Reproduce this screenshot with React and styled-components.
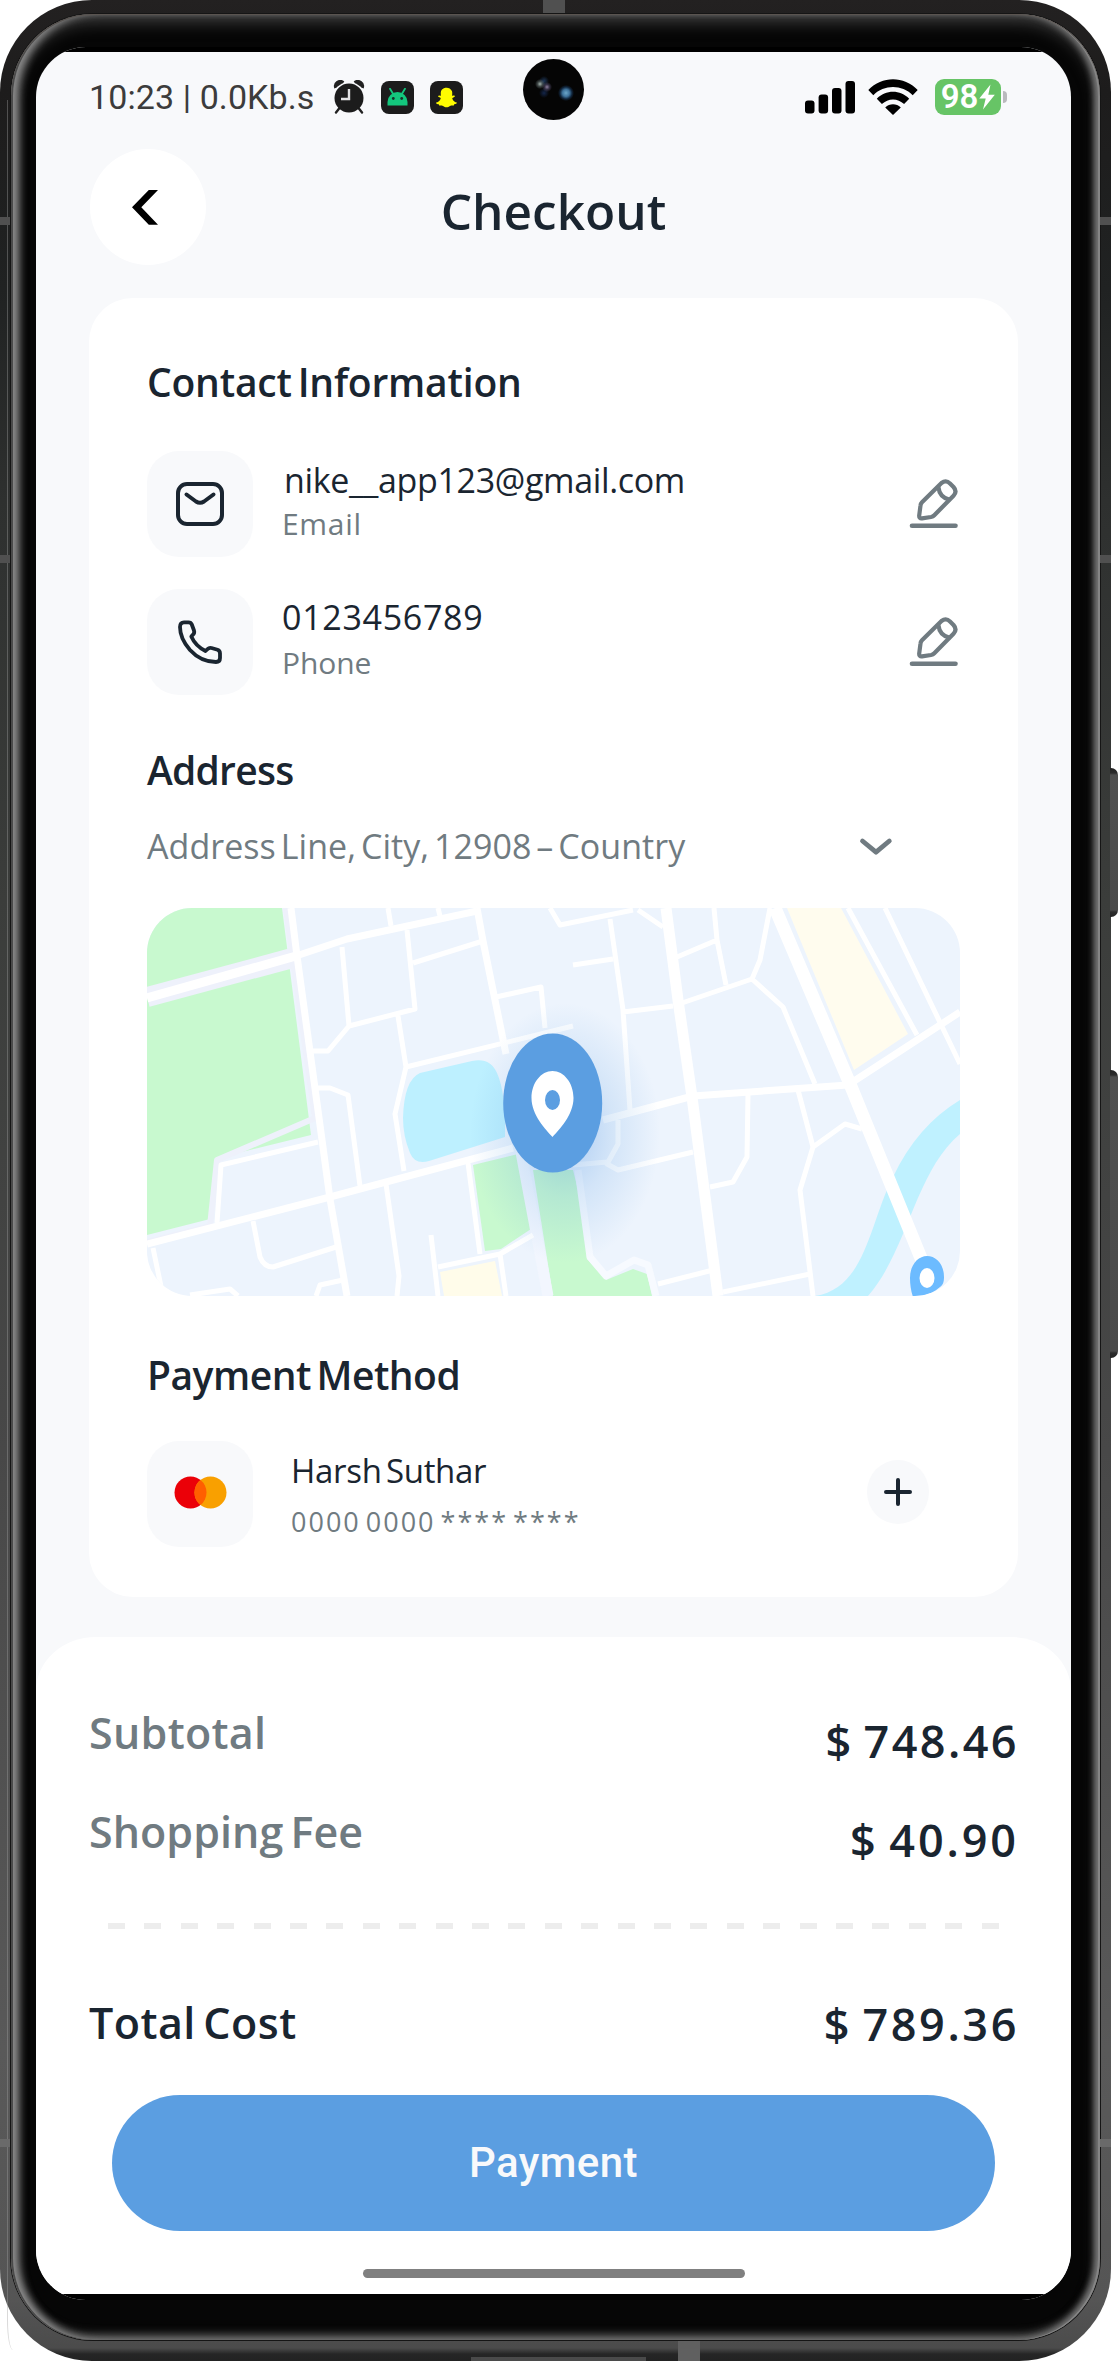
import React from "react";
import styled, { createGlobalStyle } from "styled-components";
import { FaSnapchatGhost } from "react-icons/fa";

const ink = "#1a2530";
const muted = "#707b81";
const surface = "#f8f9fb";
const blue = "#5b9ee1";

const GlobalStyle = createGlobalStyle`
  *, *::before, *::after { box-sizing: border-box; }
  body { margin: 0; background: #fff; overflow: hidden; }
  svg { display: block; flex: none; }
`;

/* ---------- Device ---------- */

const Device = styled.div`
  position: relative;
  width: 1118px;
  height: 2361px;
  overflow: hidden;
  font-family: "Open Sans", "Noto Sans", sans-serif;
  font-weight: 450;
  word-spacing: -4px;
  color: ${ink};
`;

const Shell = styled.div`
  width: 1111px;
  height: 2361px;
  padding: 14px 11px 21px;
  border-radius: 92px;
  overflow: hidden;
  background: linear-gradient(
    180deg,
    #232121 0,
    #1d1c1c 90px,
    #202222 290px,
    #2e302f 500px,
    #3b3d3b 900px,
    #484848 1450px,
    #595959 2050px,
    #555 2300px,
    #4b4b4b 2348px,
    #262626 2354px,
    #222 2361px
  );
`;

const Bezel = styled.div`
  height: 2326px;
  padding: 33px 29px 40px 25px;
  border-radius: 82px;
  background: #060606;
  box-shadow:
    0 0 0 1px #151515,
    inset 0 1px 0 #5a5450,
    inset 2px 0 0 #4a4a4a,
    inset -2px 0 0 #858585,
    inset 11px 0 9px -3px #8c8c8c,
    inset -8px 0 6px -2px #777,
    inset 0 8px 18px -2px #4c4c4c,
    inset 0 -6px 10px -1px #6a6a6a;
`;

const SideKey = styled.div`
  position: absolute;
  left: 1110px;
  top: ${(p) => p.$top}px;
  width: 8px;
  height: ${(p) => p.$height}px;
  border-radius: 0 7px 7px 0;
  background: linear-gradient(180deg, #242424 0, #2c2c2c 5px, #505050 7px, #4a4a4a calc(100% - 7px), #2c2c2c calc(100% - 5px), #242424 100%);
`;

const Antenna = styled.div`
  position: absolute;
  left: ${(p) => p.$x}px;
  top: ${(p) => p.$y}px;
  width: ${(p) => p.$w}px;
  height: ${(p) => p.$h}px;
  background: ${(p) => p.$tone || "#505050"};
`;

const EdgeSheen = styled.div`
  position: absolute;
  left: 7px;
  top: 100px;
  width: 6px;
  height: 2250px;
  border-left: 1px solid rgba(160, 160, 160, 0.4);
  border-bottom-left-radius: 6px 30px;
`;

const Screen = styled.main`
  position: relative;
  display: flex;
  flex-direction: column;
  height: 2253px;
  border-radius: 50px;
  overflow: hidden;
  background: ${surface};
`;

const BlackStrip = styled.div`
  flex: none;
  height: ${(p) => p.$size}px;
  background: #000;
`;

const Camera = styled.div`
  position: absolute;
  left: 487px;
  top: 12px;
  width: 61px;
  height: 61px;
  border-radius: 50%;
  background:
    radial-gradient(circle at 17px 25px, #a3b3ad 0, rgba(120, 135, 135, 0.5) 2.5px, transparent 5px),
    radial-gradient(circle at 24px 28px, #8d809f 0, rgba(100, 90, 130, 0.5) 2.5px, transparent 5px),
    radial-gradient(circle at 21px 22px, #1d3658 0, transparent 5px),
    radial-gradient(circle at 21px 34px, #14264a 0, transparent 5px),
    radial-gradient(circle at 43px 34px, #6ba6c9 0, #3f749d 3.5px, #10253c 6px, transparent 8px),
    #050505;
`;

/* ---------- Status bar ---------- */

const StatusBar = styled.header`
  display: flex;
  align-items: center;
  justify-content: space-between;
  height: 90px;
  padding: 0 64px 0 53px;
`;

const StatusGroup = styled.div`
  display: flex;
  align-items: center;
  gap: ${(p) => p.$gap}px;
`;

const Clock = styled.span`
  width: 228px;
  font: 400 34px/44px Roboto, sans-serif;
  letter-spacing: 0.1px;
  word-spacing: 0;
  color: #3c3c3c;
  white-space: nowrap;
`;

const AppTile = styled.span`
  display: flex;
  align-items: center;
  justify-content: center;
  width: 33px;
  height: 33px;
  border-radius: 8px;
  background: #1c1c1c;
  color: #fffc00;
`;

const Battery = styled.div`
  display: flex;
  align-items: center;
  gap: 2px;
`;

const BatteryBody = styled.div`
  display: flex;
  align-items: center;
  justify-content: center;
  gap: 1px;
  width: 66px;
  height: 36px;
  border-radius: 9px;
  background: #67c466;
  color: #fff;
  font: 600 33px/36px Roboto, sans-serif;
`;

const BatteryCap = styled.div`
  width: 4px;
  height: 12px;
  border-radius: 0 6px 6px 0;
  background: #b9babd;
`;

/* ---------- Header ---------- */

const TitleBar = styled.div`
  display: grid;
  grid-template-columns: 116px 1fr 116px;
  align-items: center;
  margin: 7px 54px 0 54px;
  height: 116px;
`;

const BackButton = styled.button`
  display: flex;
  align-items: center;
  justify-content: center;
  width: 116px;
  height: 116px;
  padding: 0 7px 0 0;
  border: 0;
  border-radius: 50%;
  background: #fff;
`;

const PageTitle = styled.h1`
  margin: 0;
  padding-top: 8px;
  text-align: center;
  font-size: 49.5px;
  line-height: 60px;
  font-weight: 600;
`;

/* ---------- Card ---------- */

const Card = styled.section`
  display: flex;
  flex-direction: column;
  flex: none;
  height: 1299px;
  margin: 33px 53px 0;
  padding: 58px 58px 0;
  border-radius: 44px;
  background: #fff;
`;

const SectionTitle = styled.h2`
  margin: ${(p) => p.$top || 0}px 0 0;
  font-size: 39px;
  line-height: 52px;
  font-weight: 600;
  letter-spacing: ${(p) => p.$track}px;
  white-space: nowrap;
`;

const InfoRow = styled.div`
  display: flex;
  align-items: center;
  height: 106px;
  margin-top: ${(p) => p.$top}px;
`;

const IconTile = styled.div`
  display: flex;
  flex: none;
  align-items: center;
  justify-content: center;
  width: 106px;
  height: 106px;
  padding-bottom: ${(p) => p.$lift || 0}px;
  border-radius: 32px;
  background: ${surface};
`;

const InfoText = styled.div`
  flex: 1;
  align-self: flex-start;
  padding: ${(p) => p.$pad}px 0 0 ${(p) => p.$indent}px;
`;

const Value = styled.div`
  font-size: ${(p) => p.$size || 34}px;
  line-height: 44px;
  text-indent: ${(p) => p.$indent || 0}px;
  letter-spacing: ${(p) => p.$track}px;
  white-space: nowrap;
`;

const Caption = styled.div`
  margin-top: ${(p) => p.$top}px;
  font-size: ${(p) => p.$size || 30}px;
  line-height: 36px;
  letter-spacing: ${(p) => p.$track}px;
  color: ${muted};
  white-space: nowrap;
`;

const IconButton = styled.button`
  padding: 0;
  border: 0;
  background: none;
`;

const AddButton = styled.button`
  display: flex;
  align-items: center;
  justify-content: center;
  width: 62px;
  height: 64px;
  margin: 0 31px 4px 0;
  padding: 0;
  border: 0;
  border-radius: 50%;
  background: ${surface};
`;

const AddressRow = styled.div`
  display: flex;
  align-items: center;
  justify-content: space-between;
  margin-top: 27px;
  padding-right: 66px;
  font-size: 34px;
  line-height: 46px;
  letter-spacing: 0.05px;
  color: ${muted};
  white-space: nowrap;
`;

const MapFrame = styled.div`
  flex: none;
  height: 388px;
  margin-top: 39px;
  border-radius: 45px;
  overflow: hidden;
`;

/* ---------- Summary ---------- */

const Summary = styled.section`
  display: flex;
  flex: 1;
  flex-direction: column;
  margin-top: 40px;
  padding: 66px 53px 0;
  border-radius: 60px 60px 0 0 / 54px 54px 0 0;
  background: #fff;
`;

const SummaryRow = styled.div`
  display: flex;
  justify-content: space-between;
  margin-top: ${(p) => p.$top || 0}px;
  font-weight: 600;
  line-height: 58px;
`;

const Label = styled.span`
  padding-top: 1px;
  font-size: 43px;
  letter-spacing: ${(p) => p.$track || 0}px;
  color: ${(p) => (p.$strong ? ink : muted)};
`;

const Amount = styled.span`
  margin-right: -1px;
  padding-top: ${(p) => p.$drop}px;
  font-size: 45px;
  letter-spacing: ${(p) => p.$track}px;
`;

const DashedRule = styled.div`
  height: 6px;
  margin: 54px 19px 0;
  background: repeating-linear-gradient(90deg, #ededed 0 17px, transparent 17px 36.4px);
`;

const PayButton = styled.button`
  height: 136px;
  margin: 42px 23px 0;
  padding: 0;
  border: 0;
  border-radius: 68px;
  background: ${blue};
  color: #f8f9fb;
  font: 500 42px/48px Roboto, sans-serif;
  letter-spacing: 0.45px;
`;

const HomeIndicator = styled.div`
  align-self: center;
  width: 382px;
  height: 9px;
  margin-top: 38px;
  border-radius: 5px;
  background: #808080;
`;

/* ---------- Icons ---------- */

const AlarmIcon = () => (
  <svg width="32" height="34" viewBox="-.5 0 32 34">
    <path d="M2 8A5 5 0 0 1 10 2.500M29 8A5 5 0 0 0 21 2.500" fill="#222" stroke="#222" strokeWidth="2.500" />
    <path d="M6 28l-3.500 4.500M25 28l3.500 4.500" stroke="#222" strokeWidth="2.400" strokeLinecap="round" />
    <circle cx="15.500" cy="18" r="14.500" fill="#1c1c1c" />
    <path d="M15.500 9v10H7.500" fill="none" stroke="#e2e2e4" strokeWidth="2.400" />
  </svg>
);

const AndroidIcon = () => (
  <svg width="21" height="19" viewBox="0 0 21 19">
    <path d="M3 .8l3 5M18 .8l-3 5" stroke="#13c77d" strokeWidth="1.800" strokeLinecap="round" />
    <path d="M.5 17.500V14a10 10 0 0 1 20 0v3.500z" fill="#13c77d" />
    <circle cx="6.300" cy="10.500" r="1.400" fill="#17342a" />
    <circle cx="14.700" cy="10.500" r="1.400" fill="#17342a" />
  </svg>
);

const SignalIcon = () => (
  <svg width="46" height="33" viewBox="0 0 46 33" overflow="visible">
    <rect x="0" y="19.500" width="9.500" height="13" rx="3" />
    <rect x="13.600" y="13.500" width="9.500" height="19" rx="3" />
    <rect x="27" y="7" width="9.500" height="25.500" rx="3" />
    <rect x="40.500" y="0" width="9.500" height="32.500" rx="3" />
  </svg>
);

const WifiIcon = () => (
  <svg width="50" height="36" viewBox="0 0 50 36">
    <path d="M.3 11C14-3.300 36-3.300 49.700 11l-5 5.200C34 5.300 16 5.300 5.300 16.200z" />
    <path d="M8.800 19.700c9-9.200 23.400-9.200 32.400 0l-5.100 5.400c-6.200-6.300-16-6.300-22.200 0z" />
    <path d="M17.200 28.500c4.500-4.300 11.100-4.300 15.600 0L25 36z" />
  </svg>
);

const BoltIcon = () => (
  <svg width="16" height="26" viewBox="0 0 16 26">
    <path d="M11.500.5L.3 14.500h6.400L4 25.500 15.800 10.800H9.300z" fill="#fff" />
  </svg>
);

const BackIcon = () => (
  <svg width="26" height="35" viewBox="0 0 26 35">
    <path d="M0 17.300L16.800 0H26L9.300 17.300 26 34.700h-9.200z" />
  </svg>
);

const MailIcon = () => (
  <svg width="48" height="44" viewBox="0 0 48 44" fill="none" stroke={ink} strokeWidth="4" strokeLinecap="round" strokeLinejoin="round">
    <rect x="2" y="2" width="44" height="40" rx="9" />
    <path d="M10.500 12.500l9.500 7q4 2.600 8 0l9.500-7" />
  </svg>
);

const PhoneIcon = () => (
  <svg width="44" height="44" viewBox="0 0 44 44" fill="none" stroke={ink} strokeWidth="3.800" strokeLinejoin="round">
    <path d="M6 2.300H10.500Q13 2.300 13.800 4.500L16 10.500Q16.800 13 14.800 14.800L13.300 16.500Q17.500 26 27.500 31L29.800 28.800Q31.200 27.400 33.500 28L39.500 29.800Q42 30.700 42 33.500V38Q42 42 38 42Q23 42 12 30Q2 18.500 2 7Q2 2.300 6 2.300Z" />
  </svg>
);

const EditIcon = () => (
  <svg width="52" height="52" viewBox="0 0 52 52" fill="none" stroke={muted} strokeWidth="4.200" strokeLinecap="round" strokeLinejoin="round">
    <path d="M4 47.700H47.500" strokeWidth="4.600" />
    <path d="M12.500 27.500Q12.700 25.500 14 24.200L33.500 5Q38 1.500 42 5.500L45.500 9Q49.500 13.500 45.500 17.800L26.300 37.200Q25 38.600 23 39L14 40.300Q11 40.600 11.200 37.500Z" />
    <path d="M30.500 9.500Q31.500 19 41 21.500" />
  </svg>
);

const ChevronDownIcon = () => (
  <svg width="36" height="20" viewBox="0 0 36 20" fill="none" stroke={muted} strokeWidth="4.800" strokeLinecap="round" strokeLinejoin="round">
    <path d="M4.500 5L18 16.200 31.300 5" />
  </svg>
);

const PlusIcon = () => (
  <svg width="28" height="28" viewBox="0 0 28 28" stroke={ink} strokeWidth="4" strokeLinecap="round">
    <path d="M14 2v24M2 14h24" />
  </svg>
);

const CardBrandIcon = () => (
  <svg width="53" height="33" viewBox="0 0 53 33">
    <circle cx="16.500" cy="16.500" r="16" fill="#eb0008" />
    <circle cx="36.500" cy="16.500" r="16" fill="#f9a000" />
    <path d="M26.500 4a16 16 0 0 1 0 25 16 16 0 0 1 0-25z" fill="#ff5f00" />
  </svg>
);

const minorRoads = [
  "M241 0L244 18", "M291 0L293 8", "M195 39L202 118",
  "M260 22L268 101L202 118L181 143H165", "M266 55L336 33",
  "M349 89L394 79L398 120", "M426 118L259 159L248 206L257 263", "M251 108L259 159",
  "M171 180H183L201 187L213 278", "M70 315L74 257L171 234",
  "M106 313L113 349Q117 359 126 359L189 339", "M6 340L16 388",
  "M169 388L173 377L196 372", "M239 276L252 368L250 388", "M284 327L291 388",
  "M321 255L333 346", "M291 359L353 346L386 327", "M353 346L359 388",
  "M43 387L83 381L91 388", "M403 0L413 17L486 2", "M491 2L516 19",
  "M463 11L476 102L483 202", "M426 57L466 51", "M476 104L526 98",
  "M530 49L570 32", "M567 0L570 32L579 77", "M535 95L605 71L613 52L623 0",
  "M605 71L636 99L668 176", "M701 0L770 127", "M738 0L813 156",
  "M601 186L600 249L586 274L563 279", "M651 182L666 239L698 216L715 221",
  "M666 239L653 282L666 388", "M471 212V236L460 256L471 262L546 244",
  "M426 257L460 254", "M511 376L566 362", "M576 384L663 366",
];

const StreetMap = () => (
  <svg width="813" height="388" viewBox="0 0 813 388">
    <defs>
      <radialGradient id="pinShade">
        <stop offset="0" stopColor="#3f86e0" stopOpacity=".4" />
        <stop offset=".5" stopColor="#5b9ee1" stopOpacity=".18" />
        <stop offset="1" stopColor="#5b9ee1" stopOpacity="0" />
      </radialGradient>
    </defs>
    <rect width="813" height="388" fill="#edf4fd" />
    <path d="M0 0H135L164 227L70 250L63 311L0 327Z" fill="#c8f9cf" />
    <path d="M273 165L325 153Q343 149 350 165Q359 185 358 229L282 253Q268 257 263 245Q256 228 256 210Q257 172 273 165Z" fill="#bdf0ff" />
    <path d="M326 257L371 246L384 321L354 341L338 343Z" fill="#c8f9cf" />
    <path d="M386 262H426L436 302L440 351L459 372L486 361L500 366L505 388H406Z" fill="#c8f9cf" />
    <path d="M293 364L348 353L355 388H297Z" fill="#fffcea" />
    <path d="M640 0H694L761 126L707 162Z" fill="#fffcee" />
    <path d="M813 192Q770 218 746 269C722 316 719 380 668 388H721C761 342 768 264 813 226Z" fill="#bff1ff" />
    <g fill="none" strokeLinejoin="round">
      <path d="M0 89L149 49" stroke="#eef1fb" strokeWidth="20" />
      <path d="M139 0L168 210L70 252L63 318L0 334" stroke="#eef1fb" strokeWidth="6" />
      <path d="M431 262L443 349L459 368L487 352L501 357L509 388" stroke="#f7faff" strokeWidth="7" />
      <path d="M374 244L401 388" stroke="#f2f6fe" strokeWidth="11" />
      <g stroke="#fff">
        <path d={minorRoads.join("")} strokeWidth="5" />
        <path d="M144 0L150 48L170 195L183 291L200 388M330 0L336 33L359 146" strokeWidth="7" />
        <path d="M0 336L183 289L366 240M149 48L200 31L330 3" strokeWidth="7" />
        <path d="M0 90L149 48" strokeWidth="9" />
        <path d="M456 212L546 188L701 177L813 104" strokeWidth="7" />
        <path d="M519 0L531 92L545 189L571 388" strokeWidth="11" />
        <path d="M628 0L703 176L776 355" strokeWidth="13" />
      </g>
    </g>
    <ellipse cx="418" cy="225" rx="95" ry="130" fill="url(#pinShade)" />
    <ellipse cx="405.700" cy="195" rx="49.500" ry="69.500" fill={blue} />
    <path d="M405.500 163C417 163 426.500 175 426.500 190C426.500 207 412 222 405.500 229C399 222 384.500 207 384.500 190C384.500 175 394 163 405.500 163Z" fill="#fff" />
    <ellipse cx="405.500" cy="192" rx="7.500" ry="10" fill={blue} />
    <path d="M780 348C789 348 797 356 797 369C797 374 796 377 793 379C786 385 778 388 770 389H766C764 383 763 377 763 370C763 357 771 348 780 348Z" fill="#6cbbff" />
    <ellipse cx="780" cy="370" rx="7.500" ry="10" fill="#fff" />
  </svg>
);

/* ---------- Screen ---------- */

export default function App() {
  return (
    <Device>
      <GlobalStyle />
      <Shell>
        <Bezel>
          <Screen>
            <BlackStrip $size={5} />
            <Camera />
            <StatusBar>
              <StatusGroup $gap={16}>
                <Clock>10:23 | 0.0Kb.s</Clock>
                <AlarmIcon />
                <AppTile><AndroidIcon /></AppTile>
                <AppTile><FaSnapchatGhost size={21} /></AppTile>
              </StatusGroup>
              <StatusGroup $gap={17}>
                <SignalIcon />
                <WifiIcon />
                <Battery>
                  <BatteryBody>98<BoltIcon /></BatteryBody>
                  <BatteryCap />
                </Battery>
              </StatusGroup>
            </StatusBar>
            <TitleBar>
              <BackButton aria-label="Back"><BackIcon /></BackButton>
              <PageTitle>Checkout</PageTitle>
            </TitleBar>
            <Card>
              <SectionTitle $track={-0.2}>Contact Information</SectionTitle>
              <InfoRow $top={43}>
                <IconTile><MailIcon /></IconTile>
                <InfoText $pad={7} $indent={29}>
                  <Value $indent={2} $track={-0.35}>nike__app123@gmail.com</Value>
                  <Caption $top={4} $track={0.7}>Email</Caption>
                </InfoText>
                <IconButton aria-label="Edit email"><EditIcon /></IconButton>
              </InfoRow>
              <InfoRow $top={32}>
                <IconTile><PhoneIcon /></IconTile>
                <InfoText $pad={6} $indent={29}>
                  <Value $track={0.7}>0123456789</Value>
                  <Caption $top={6} $track={-0.1}>Phone</Caption>
                </InfoText>
                <IconButton aria-label="Edit phone"><EditIcon /></IconButton>
              </InfoRow>
              <SectionTitle $top={49} $track={-0.75}>Address</SectionTitle>
              <AddressRow>
                Address Line, City, 12908 – Country
                <ChevronDownIcon />
              </AddressRow>
              <MapFrame><StreetMap /></MapFrame>
              <SectionTitle $top={53} $track={-0.5}>Payment Method</SectionTitle>
              <InfoRow $top={40}>
                <IconTile $lift={4}><CardBrandIcon /></IconTile>
                <InfoText $pad={8} $indent={38}>
                  <Value $size={33} $track={-0.3}>Harsh Suthar</Value>
                  <Caption $top={11} $size={27} $track={2}>0000 0000 **** ****</Caption>
                </InfoText>
                <AddButton aria-label="Add card"><PlusIcon /></AddButton>
              </InfoRow>
            </Card>
            <Summary>
              <SummaryRow>
                <Label $track={0.3}>Subtotal</Label>
                <Amount $drop={9} $track={2.4}>$ 748.46</Amount>
              </SummaryRow>
              <SummaryRow $top={32}>
                <Label $track={0.05}>Shopping Fee</Label>
                <Amount $drop={9} $track={2.9}>$ 40.90</Amount>
              </SummaryRow>
              <DashedRule />
              <SummaryRow $top={64}>
                <Label $strong $track={0.45}>Total Cost</Label>
                <Amount $drop={2} $track={2.6}>$ 789.36</Amount>
              </SummaryRow>
              <PayButton>Payment</PayButton>
              <HomeIndicator />
            </Summary>
            <BlackStrip $size={6} />
          </Screen>
        </Bezel>
      </Shell>
      <EdgeSheen />
      <Antenna $x={0} $y={217} $w={10} $h={8} />
      <Antenna $x={0} $y={555} $w={10} $h={8} />
      <Antenna $x={0} $y={2139} $w={10} $h={8} $tone="#6a6a6a" />
      <Antenna $x={1100} $y={217} $w={11} $h={8} />
      <Antenna $x={1100} $y={555} $w={11} $h={8} />
      <Antenna $x={1100} $y={2139} $w={11} $h={8} $tone="#6a6a6a" />
      <Antenna $x={543} $y={0} $w={22} $h={13} />
      <Antenna $x={678} $y={2341} $w={22} $h={20} $tone="#606060" />
      <Antenna $x={471} $y={2357} $w={175} $h={4} $tone="#4a4a4a" />
      <SideKey $top={768} $height={149} />
      <SideKey $top={1070} $height={288} />
    </Device>
  );
}
